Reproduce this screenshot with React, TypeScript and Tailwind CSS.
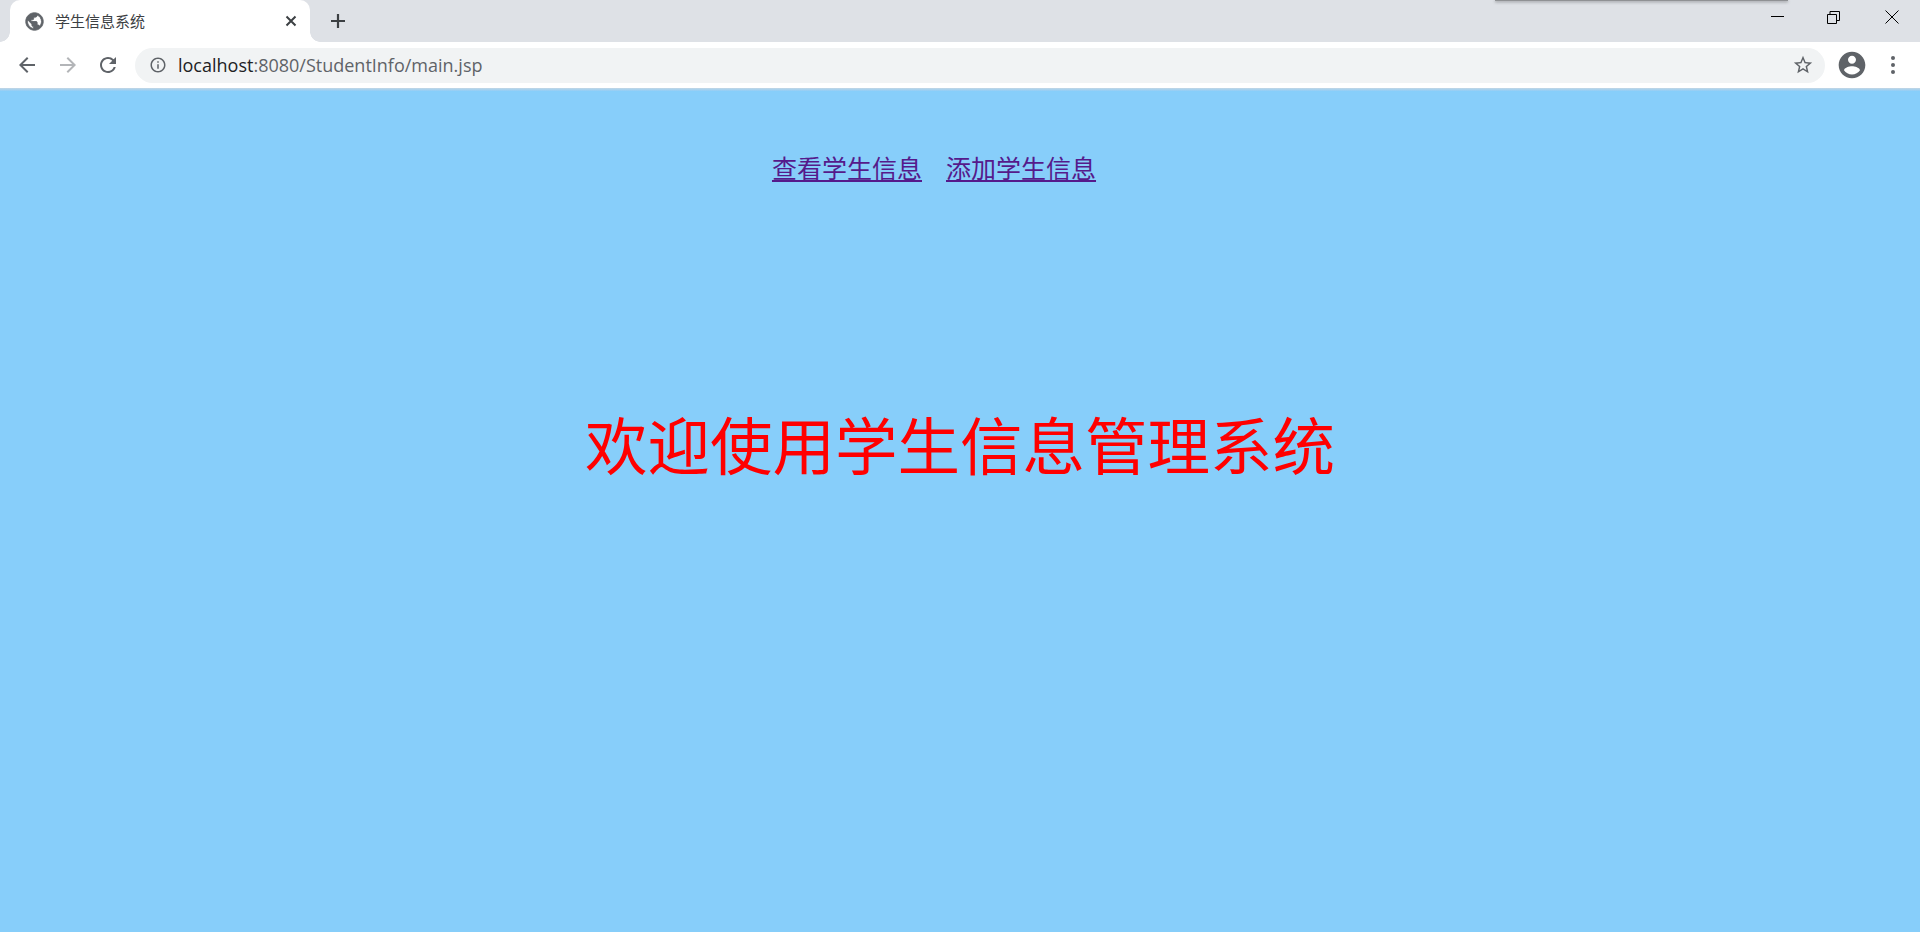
const cjk = "font-['Microsoft_YaHei','Noto_Sans_CJK_SC',sans-serif]";

const Chrome = () => (
  <div className="relative shrink-0">
    {/* shadow of a window sitting above this one */}
    <div className="absolute left-[1495px] top-0 w-[293px] h-[1px] bg-[#8f9194] shadow-[0_1px_3px_rgba(0,0,0,0.55)]" />
    <div className="h-[42px] bg-[#dee1e6] flex items-end">
      <div className="relative ml-[10px] w-[300px] h-[42px] bg-white rounded-t-[10px] flex items-center pl-[14px] pr-[12px]">
        <div className="absolute right-full bottom-0 w-[10px] h-[10px] bg-[radial-gradient(circle_at_0_0,transparent_9.5px,white_10px)]" />
        <div className="absolute left-full bottom-0 w-[10px] h-[10px] bg-[radial-gradient(circle_at_100%_0,transparent_9.5px,white_10px)]" />
        <svg width="21" height="21" viewBox="0 0 24 24" className="shrink-0 fill-[#5f6368] stroke-[#5f6368]" strokeWidth="1">
          <path d="M12 2C6.48 2 2 6.48 2 12s4.48 10 10 10 10-4.48 10-10S17.52 2 12 2zm-1 17.93c-3.95-.49-7-3.85-7-7.93 0-.62.08-1.21.21-1.79L9 15v1c0 1.1.9 2 2 2v1.93zm6.9-2.54c-.26-.81-1-1.39-1.9-1.39h-1v-3c0-.55-.45-1-1-1H8v-2h2c.55 0 1-.45 1-1V7h2c1.1 0 2-.9 2-2v-.41c2.93 1.19 5 4.06 5 7.41 0 2.08-.8 3.97-2.1 5.39z" />
        </svg>
        <span className={`${cjk} ml-[10px] text-[15px] text-[#3c4043] flex-1`}>学生信息系统</span>
        <svg width="14" height="14" viewBox="0 0 14 14" className="stroke-[#3c4043]" strokeWidth="2">
          <path d="M2.5 2.5l9 9M11.5 2.5l-9 9" />
        </svg>
      </div>
      <svg width="16" height="16" viewBox="0 0 16 16" className="ml-[20px] mb-[13px] stroke-[#3c4043]" strokeWidth="2.2">
        <path d="M8 1v14M1 8h14" />
      </svg>
      <div className="ml-auto flex self-start items-center h-[34px] mr-[21px] gap-[44px]">
        <svg width="13" height="13" viewBox="0 0 13 13" className="stroke-black" strokeWidth="1"><path d="M0 5.5h13" /></svg>
        <svg width="13" height="13" viewBox="0 0 13 13" className="stroke-black fill-none -translate-x-[1px]" strokeWidth="1"><path d="M.5 3.5h9v9h-9zM3 3.5V.5h9.5v9H9.5" /></svg>
        <svg width="14" height="14" viewBox="0 0 14 14" className="stroke-black" strokeWidth="1"><path d="M.5.5l13 13M13.5.5l-13 13" /></svg>
      </div>
    </div>
    <div className="h-[46px] bg-white flex items-center">
      <svg width="24" height="24" viewBox="0 0 24 24" className="ml-[15px] fill-[#5f6368]">
        <path d="M20 11H7.83l5.59-5.59L12 4l-8 8 8 8 1.41-1.41L7.83 13H20v-2z" />
      </svg>
      <svg width="24" height="24" viewBox="0 0 24 24" className="ml-[17px] fill-[#b3b5b8]">
        <path d="M12 4l-1.41 1.41L16.17 11H4v2h12.17l-5.58 5.59L12 20l8-8z" />
      </svg>
      <svg width="24" height="24" viewBox="0 0 24 24" className="ml-[16px] fill-[#5f6368]">
        <path d="M17.65 6.35A7.958 7.958 0 0 0 12 4c-4.42 0-7.99 3.58-7.99 8s3.57 8 7.99 8c3.73 0 6.84-2.55 7.73-6h-2.08A5.99 5.99 0 0 1 12 18c-3.31 0-6-2.69-6-6s2.69-6 6-6c1.66 0 3.14.69 4.22 1.78L13 11h7V4l-2.35 2.35z" />
      </svg>
      <div className="ml-[15px] w-[1690px] h-[35px] rounded-full bg-[#f1f3f4] flex items-center pl-[14px] pr-[11px]">
        <svg width="18" height="18" viewBox="0 0 24 24" className="fill-[#5f6368] shrink-0">
          <path d="M11 7h2v2h-2zm0 4h2v6h-2zm1-9C6.48 2 2 6.48 2 12s4.48 10 10 10 10-4.48 10-10S17.52 2 12 2zm0 18c-4.41 0-8-3.59-8-8s3.59-8 8-8 8 3.59 8 8-3.59 8-8 8z" />
        </svg>
        <span className="ml-[11px] text-[18px] font-['Open_Sans',sans-serif] flex-1 text-[#5f6368]">
          <span className="text-[#202124]">localhost</span>:8080/StudentInfo/main.jsp
        </span>
        <svg width="22" height="22" viewBox="0 0 24 24" className="fill-[#5f6368] shrink-0">
          <path d="M22 9.24l-7.19-.62L12 2 9.19 8.63 2 9.24l5.46 4.73L5.82 21 12 17.27 18.18 21l-1.63-7.03L22 9.24zM12 15.4l-3.76 2.27 1-4.28-3.32-2.88 4.38-.38L12 6.1l1.71 4.04 4.38.38-3.32 2.88 1 4.28L12 15.4z" />
        </svg>
      </div>
      <svg width="32" height="32" viewBox="0 0 24 24" className="ml-[11px] fill-[#5f6368]">
        <path d="M12 2C6.48 2 2 6.48 2 12s4.48 10 10 10 10-4.48 10-10S17.52 2 12 2zm0 3c1.66 0 3 1.34 3 3s-1.34 3-3 3-3-1.34-3-3 1.34-3 3-3zm0 14.2c-2.5 0-4.71-1.28-6-3.22.03-1.99 4-3.08 6-3.08 1.99 0 5.97 1.09 6 3.08-1.29 1.94-3.5 3.22-6 3.22z" />
      </svg>
      <div className="ml-[23px] flex flex-col gap-[3px]">
        <div className="w-[4px] h-[4px] rounded-full bg-[#5f6368]" />
        <div className="w-[4px] h-[4px] rounded-full bg-[#5f6368]" />
        <div className="w-[4px] h-[4px] rounded-full bg-[#5f6368]" />
      </div>
    </div>
    <div className="h-[3px] bg-gradient-to-b from-[#c3d6e4] to-[#8fcdf6]" />
  </div>
);

const App = () => {
  return (
    <div className={`${cjk} h-[932px] w-full overflow-hidden flex flex-col bg-[#87cefa]`}>
      <Chrome />
      <div className="flex-1 bg-[#87cefa] pt-[59px]">
        <div className="flex justify-center gap-[24px] pr-[52px] text-[25px] leading-[34px] text-[#551a8b]">
          <a href="#" className="underline">查看学生信息</a>
          <a href="#" className="underline">添加学生信息</a>
        </div>
        <h1 className="mt-[213px] text-center text-[62.5px] leading-[92px] font-normal text-[#ff0000]">
          欢迎使用学生信息管理系统
        </h1>
      </div>
    </div>
  );
};

export default App;
